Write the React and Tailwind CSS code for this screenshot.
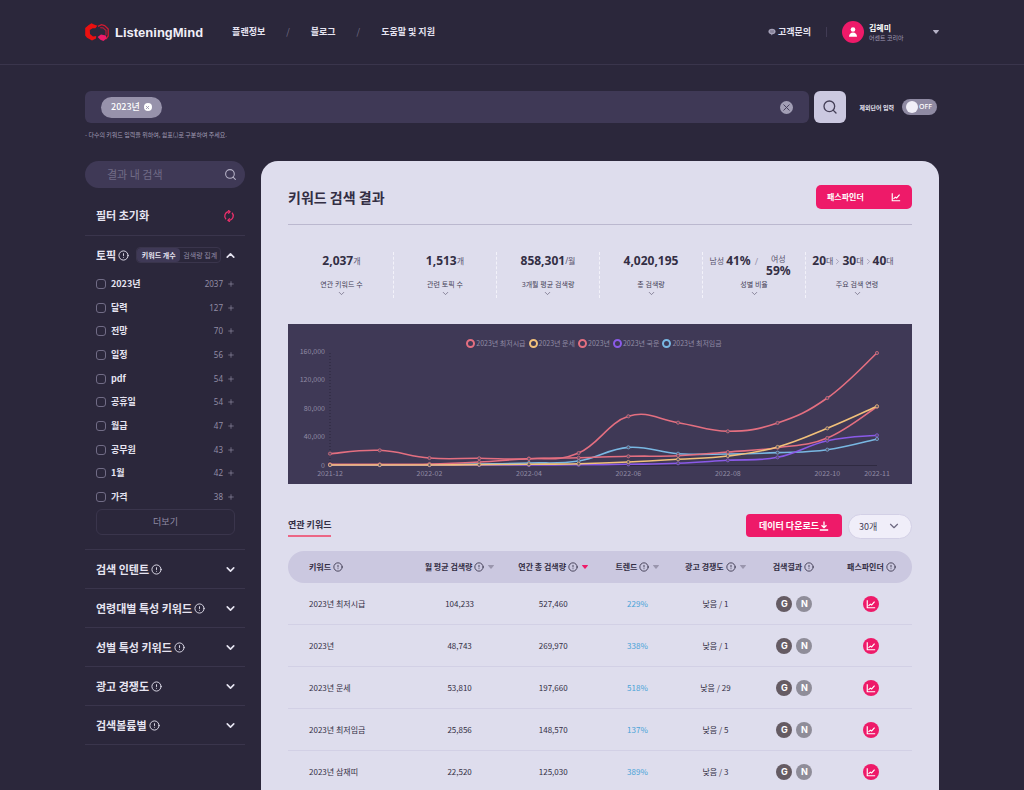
import React, { useState } from "react";
import { ChevronDown, ChevronRight, ChevronUp, CircleAlert, Plus, Search, X } from "lucide-react";

const TOPICS = [
  { name: "2023년", count: 2037 },
  { name: "달력", count: 127 },
  { name: "전망", count: 70 },
  { name: "일정", count: 56 },
  { name: "pdf", count: 54 },
  { name: "공휴일", count: 54 },
  { name: "월급", count: 47 },
  { name: "공무원", count: 43 },
  { name: "1월", count: 42 },
  { name: "가격", count: 38 },
];

const SECTIONS = ["검색 인텐트", "연령대별 특성 키워드", "성별 특성 키워드", "광고 경쟁도", "검색볼륨별"];

// monthly values in thousands, 2021-12 to 2022-11
const SERIES = [
  { name: "2023년 최저시급", color: "#e46f80", values: [15.9, 20.6, 9.8, 9.4, 8.8, 16.8, 68.4, 59.4, 47.3, 59, 94, 157.2] },
  { name: "2023년 운세", color: "#f2c17a", values: [0, 0, 0, 0.5, 1, 1.8, 4.2, 8, 12.6, 25.3, 51.5, 82.4] },
  { name: "2023년", color: "#e46f80", values: [1, 1, 1.4, 4.2, 8.8, 10.2, 12.2, 13, 18.2, 24.3, 37.9, 81.8] },
  { name: "2023년 국운", color: "#8a5ae8", values: [0, 0, 0, 0, 0, 0.3, 1, 2.4, 6.6, 10.8, 34.1, 41.7] },
  { name: "2023년 최저임금", color: "#79b8e3", values: [0, 0, 0.4, 1.4, 2.8, 5.6, 24.8, 15.8, 15.4, 17.3, 21.5, 36.5] },
];

const MONTHS = [
  { index: 0, label: "2021-12" },
  { index: 2, label: "2022-02" },
  { index: 4, label: "2022-04" },
  { index: 6, label: "2022-06" },
  { index: 8, label: "2022-08" },
  { index: 10, label: "2022-10" },
  { index: 11, label: "2022-11" },
];

const COLUMNS = [
  { label: "키워드", width: "w-[20%]" },
  { label: "월 평균 검색량", width: "w-[15%]", sort: "text-[#9a96ad]" },
  { label: "연간 총 검색량", width: "w-[15%]", sort: "text-[#ee1a69]" },
  { label: "트렌드", width: "w-[12%]", sort: "text-[#9a96ad]" },
  { label: "광고 경쟁도", width: "w-[13%]", sort: "text-[#9a96ad]" },
  { label: "검색결과", width: "w-[12%]" },
  { label: "패스파인더", width: "w-[13%]" },
];

const ROWS = [
  { keyword: "2023년 최저시급", monthly: "104,233", yearly: "527,460", trend: "229%", ads: "낮음 / 1" },
  { keyword: "2023년", monthly: "48,743", yearly: "269,970", trend: "338%", ads: "낮음 / 1" },
  { keyword: "2023년 운세", monthly: "53,810", yearly: "197,660", trend: "518%", ads: "낮음 / 29" },
  { keyword: "2023년 최저임금", monthly: "25,856", yearly: "148,570", trend: "137%", ads: "낮음 / 5" },
  { keyword: "2023년 삼재띠", monthly: "22,520", yearly: "125,030", trend: "389%", ads: "낮음 / 3" },
];

function Logo() {
  return (
    <svg viewBox="0 0 24 18" className="h-[18px] w-6" fill="none" aria-hidden="true">
      <path d="M6.5 0.3 L9 1.6 L12.4 2.8 L10.4 5.2 L7.6 5.2 L4.8 7 L5 11 L8 13.4 L11.2 13 L11 15.6 L7 17.6 L2 14.8 L0.2 12.4 V5 L3.4 2.2 Z" fill="#ea1010" />
      <path d="M13 3.4 L16.5 1.6 L19.6 2.6 L23.2 6 V13 L21 16" stroke="#d01a30" strokeWidth="1.3" />
      <path d="M15.2 4.6 L18 4.8 L21 7.6 V12" stroke="#b01c38" strokeWidth="1.2" />
      <path d="M12.6 14 L16 11.6 L20.8 12.4 L21.6 15.4 L18.4 17.9 L15.4 16.8 Z" fill="#ee1a69" />
    </svg>
  );
}

function Caret({ className }) {
  return (
    <svg viewBox="0 0 6 4" className={`h-1 w-1.5 shrink-0 ${className}`} aria-hidden="true">
      <path d="M0.5 0h5a.4.4 0 0 1 .3.7L3.3 3.7a.4.4 0 0 1-.6 0L.2.7A.4.4 0 0 1 .5 0Z" fill="currentColor" />
    </svg>
  );
}

function GraphIcon({ className }) {
  return (
    <svg viewBox="0 0 12 12" className={className} fill="none" stroke="currentColor" strokeWidth="1.4" aria-hidden="true">
      <path d="M1.5 1.5V10.5H11" />
      <path d="M3 8.3L5.2 6.2L6.8 7.2L10.3 3.2" />
    </svg>
  );
}

function Header() {
  return (
    <header className="flex h-[65px] items-center border-b border-[#3a354c] px-[85px]">
      <a href="#home" className="flex items-center gap-1.5">
        <Logo />
        <span className="font-['Liberation_Sans'] text-[13px] leading-none font-bold text-[#f1eff8]">ListeningMind</span>
      </a>
      <nav className="ml-[29px] flex items-center text-[9px] font-bold whitespace-nowrap">
        <a href="#plan">플랜정보</a>
        <span className="mx-[21px] font-normal text-[#77728a]">/</span>
        <a href="#blog">블로그</a>
        <span className="mx-[21px] font-normal text-[#77728a]">/</span>
        <a href="#help">도움말 및 지원</a>
      </nav>
      <div className="ml-auto flex items-center">
        <a href="#contact" className="flex items-center gap-0.5 text-[9px] font-bold">
          <svg viewBox="0 0 10 10" className="size-2" aria-hidden="true">
            <path d="M5 1c2.700 0 4.500 1.500 4.500 3.400S7.800 7.700 5.600 7.900L4.600 9.400L4 7.800C2 7.500 0.500 6.200 0.500 4.400c0-1.900 1.800-3.400 4.500-3.400Z" fill="#a5a1b8" />
            <path d="M2.500 3.700H7.500M2.900 5.200H7.100" stroke="#4d475f" strokeWidth="0.600" />
          </svg>
          고객문의
        </a>
        <span className="mx-[15px] h-2.5 w-px bg-[#413b54]" />
        <button type="button" className="flex items-center text-left">
          <span className="flex size-[22px] items-center justify-center rounded-full bg-[#ee1a69]">
            <svg viewBox="0 0 10 12" className="h-3 w-2.5" fill="#fff" aria-hidden="true">
              <circle cx="5" cy="3.500" r="2.300" />
              <path d="M1 10.800c0-2.600 1.600-4.200 4-4.200s4 1.600 4 4.200Z" />
            </svg>
          </span>
          <span className="ml-[5px] flex w-16 flex-col gap-0.5">
            <span className="text-[8px] leading-[8px] font-bold text-white">김혜미</span>
            <span className="text-[6px] leading-[7px] text-[#a29eb5]">어센트 코리아</span>
          </span>
          <Caret className="text-[#b5b1c6]" />
        </button>
      </div>
    </header>
  );
}

function SearchBar() {
  const [tags, setTags] = useState(["2023년"]);

  return (
    <section className="px-[85px] pt-[26px]">
      <div className="flex items-center">
        <div className="flex h-8 flex-1 items-center rounded-md bg-[#3f3956] px-4">
          {tags.map((tag) => (
            <span key={tag} className="flex h-[21px] items-center gap-1 rounded-full bg-[#9792ab] px-2.5 text-[9px] font-medium text-white">
              {tag}
              <button
                type="button"
                aria-label={`${tag} 삭제`}
                onClick={() => setTags(tags.filter((t) => t !== tag))}
                className="flex size-2 items-center justify-center rounded-full bg-white text-[#9792ab]"
              >
                <X size={5} strokeWidth={4} />
              </button>
            </span>
          ))}
          <input type="text" aria-label="키워드 입력" className="h-full min-w-0 flex-1 bg-transparent px-2 text-[9px] outline-none" />
          <button
            type="button"
            aria-label="전체 삭제"
            onClick={() => setTags([])}
            className="flex size-[13px] items-center justify-center rounded-full bg-[#a29eb5] text-[#3f3956]"
          >
            <X size={11} strokeWidth={2} />
          </button>
        </div>
        <button type="button" aria-label="검색" className="ml-[5px] flex size-8 items-center justify-center rounded-md bg-[#cbc8e0] text-[#453f57]">
          <Search size={16} strokeWidth={2} />
        </button>
        <label htmlFor="exclude" className="ml-3.5 text-[6px] font-bold whitespace-nowrap">
          제외단어 입력
        </label>
        <span className="relative mr-0.5 ml-2 flex">
          <input id="exclude" type="checkbox" className="peer h-4 w-[35px] appearance-none rounded-full bg-[#8f8aa3] checked:bg-[#ee1a69]" />
          <span className="pointer-events-none absolute top-0.5 left-1 size-3 rounded-full bg-[#f1eff8] peer-checked:hidden" />
          <span className="pointer-events-none absolute top-1 right-[5px] font-['Noto_Sans'] text-[7px] leading-2 font-medium text-white">OFF</span>
        </span>
      </div>
      <p className="mt-2 h-[30px] text-[6px] leading-2 text-[#a29eb5]">- 다수의 키워드 입력을 위하여, 쉼표(,)로 구분하여 주세요.</p>
    </section>
  );
}

function Sidebar() {
  return (
    <aside className="w-40 shrink-0">
      <div className="flex h-[27px] items-center rounded-full bg-[#3f3956] pr-2 pl-[22px]">
        <input
          type="search"
          aria-label="결과 내 검색"
          placeholder="결과 내 검색"
          className="min-w-0 flex-1 bg-transparent text-[11px] outline-none placeholder:text-[#716c87]"
        />
        <Search size={13} strokeWidth={2} className="text-[#b5b1c6]" />
      </div>

      <div className="flex h-12 items-center justify-between border-b border-[#3a354c] pt-2 pr-2.5 pl-[11px]">
        <h2 className="text-[11px] font-bold">필터 초기화</h2>
        <button type="button" aria-label="필터 초기화">
          <svg viewBox="0 0 12 12" className="size-3" fill="none" stroke="#ee2f6b" strokeWidth="1.300" aria-hidden="true">
            <path d="M3 9.300A4.500 4.500 0 0 1 5.800 1.700" />
            <path d="M9 2.700A4.500 4.500 0 0 1 6.200 10.300" />
            <path d="M5.200 0.200L7 1.800L5.200 3.600" />
            <path d="M6.800 8.400L5 10.200L6.800 11.800" />
          </svg>
        </button>
      </div>

      <div className="border-b border-[#3a354c] pb-3.5">
        <div className="flex h-9 items-center pt-0.5 pr-2 pl-[11px]">
          <h2 className="text-[11px] font-bold">토픽</h2>
          <CircleAlert size={11} strokeWidth={2} className="ml-0.5" />
          <div className="ml-[7px] flex h-4 rounded-sm border border-[#3a354c] text-[7px] whitespace-nowrap">
            <button type="button" className="w-[43px] rounded-sm bg-[#3f3956] font-bold">키워드 개수</button>
            <button type="button" className="w-10 text-[#918ca5]">검색량 집계</button>
          </div>
          <button type="button" aria-label="토픽 접기" className="ml-auto">
            <ChevronUp size={13} strokeWidth={3} />
          </button>
        </div>
        <ul className="flex h-[237px] flex-col pr-2.5 pl-[11px] leading-3">
          {TOPICS.map((topic) => (
            <li key={topic.name} className="flex flex-1 items-center">
              <label className="flex items-center gap-[5px] text-[9px] font-bold">
                <input
                  type="checkbox"
                  className="size-2.5 appearance-none rounded-[3px] border border-[#716c86] checked:bg-[#ee1a69]"
                />
                {topic.name}
              </label>
              <span className="ml-auto font-['Noto_Sans'] text-[8px] text-[#918ca5]">{topic.count}</span>
              <button type="button" aria-label={`${topic.name} 추가`} className="ml-1 text-[#918ca5]">
                <Plus size={8} strokeWidth={2} />
              </button>
            </li>
          ))}
        </ul>
        <div className="pr-2.5 pl-[11px]">
          <button type="button" className="block h-[26px] w-full rounded-md border border-[#3a354c] text-[9px] text-[#918ca5]">
            더보기
          </button>
        </div>
      </div>

      {SECTIONS.map((title) => (
        <div key={title} className="flex h-[39px] items-center border-b border-[#3a354c] pr-2 pl-[11px]">
          <h2 className="text-[11px] font-bold">{title}</h2>
          <CircleAlert size={11} strokeWidth={2} className="ml-0.5" />
          <button type="button" aria-label={`${title} 펼치기`} className="ml-auto">
            <ChevronDown size={13} strokeWidth={3} />
          </button>
        </div>
      ))}
    </aside>
  );
}

function Unit({ children }) {
  return <span className="text-[8px] font-normal text-[#5b5570]">{children}</span>;
}

function Stat({ label, className = "", children }) {
  return (
    <div className="flex flex-col items-center border-l border-dashed border-[#f3f2fa] first:border-l-0">
      <div className={`flex h-[18px] items-center justify-center text-[12px] leading-none font-bold whitespace-nowrap ${className}`}>{children}</div>
      <button type="button" className="mt-2.5 flex flex-col items-center text-[7px] leading-[9px] text-[#453f57]">
        {label}
        <ChevronDown size={9} strokeWidth={2} className="text-[#6d6880]" />
      </button>
    </div>
  );
}

function Stats() {
  return (
    <div className="mr-1 ml-0.5 mt-[27px] grid h-[45px] grid-cols-6 font-['Noto_Sans','Noto_Sans_CJK_KR',sans-serif]">
      <Stat label="연관 키워드 수">2,037<Unit>개</Unit></Stat>
      <Stat label="관련 토픽 수">1,513<Unit>개</Unit></Stat>
      <Stat label="3개월 평균 검색량">858,301<Unit>/월</Unit></Stat>
      <Stat label="총 검색량">4,020,195</Stat>
      <Stat label="성별 비율" className="pr-2">
        <Unit>남성</Unit>
        <span className="ml-0.5">41%</span>
        <span className="mx-1 text-[9px] font-normal text-[#9a96ad]">/</span>
        <span className="ml-1 flex flex-col items-center pt-2.5">
          <Unit>여성</Unit>
          <span className="mt-0.5">59%</span>
        </span>
      </Stat>
      <Stat label="주요 검색 연령" className="pr-2">
        20<Unit>대</Unit>
        <ChevronRight size={9} strokeWidth={2} className="text-[#9a96ad]" />
        30<Unit>대</Unit>
        <ChevronRight size={9} strokeWidth={2} className="text-[#9a96ad]" />
        40<Unit>대</Unit>
      </Stat>
    </div>
  );
}

const plotX = (i) => 42 + (i * 547) / 11;
const plotY = (v) => 117 - (v * 114) / 160;

function curve(values) {
  const pts = values.map((v, i) => [plotX(i), plotY(v)]);
  const at = (i) => pts[Math.max(0, Math.min(pts.length - 1, i))];
  return pts.slice(1).reduce((d, p, i) => {
    const a = at(i);
    const before = at(i - 1);
    const after = at(i + 2);
    const c1 = [a[0] + (p[0] - before[0]) * 0.2, a[1] + (p[1] - before[1]) * 0.2];
    const c2 = [p[0] - (after[0] - a[0]) * 0.2, p[1] - (after[1] - a[1]) * 0.2];
    return `${d} C${c1} ${c2} ${p}`;
  }, `M${pts[0]}`);
}

function TrendChart() {
  return (
    <div className="mt-[27px] bg-[#3f3956] pt-3.5">
      <ul className="flex h-2.5 items-center justify-center gap-[3px] pr-3 text-[7px] leading-2.5 text-[#918ca5]">
        {SERIES.map((s) => (
          <li key={s.name} className="flex items-center gap-px whitespace-nowrap">
            <span className="size-[9px] rounded-full border-2" style={{ borderColor: s.color }} />
            {s.name}
          </li>
        ))}
      </ul>
      <svg viewBox="0 0 624 136" className="block w-full overflow-visible text-[7px]" role="img" aria-label="월별 검색량 추이">
        {[160, 120, 80, 40, 0].map((v) => (
          <text key={v} x="37" y={plotY(v) + 2.5} textAnchor="end" fill="#918ca5">
            {v ? `${v},000` : "0"}
          </text>
        ))}
        {MONTHS.map((m) => (
          <text key={m.label} x={plotX(m.index)} y="128" textAnchor="middle" fill="#918ca5">
            {m.label}
          </text>
        ))}
        <path d="M42 5V117" stroke="#2b273b" strokeDasharray="1 2" />
        <path d="M42 117.500H589" stroke="#2f2a41" />
        {[...SERIES].reverse().map((s) => (
          <g key={s.name} fill="none" stroke={s.color}>
            <path d={curve(s.values)} strokeWidth="1.600" />
            {s.values.map((v, i) => (
              <circle key={i} cx={plotX(i)} cy={plotY(v)} r="1.600" fill="#5a5068" strokeWidth="0.700" />
            ))}
          </g>
        ))}
      </svg>
    </div>
  );
}

function KeywordTable() {
  return (
    <table className="mt-3 w-full table-fixed border-separate border-spacing-0 text-[8px] whitespace-nowrap">
      <thead>
        <tr className="h-8">
          {COLUMNS.map((col) => (
            <th key={col.label} className={`${col.width} bg-[#cbc8e0] p-0 font-bold first:rounded-l-full first:pl-[21px] last:rounded-r-full`}>
              <span className={`flex items-center gap-0.5 ${col.label === "키워드" ? "" : "justify-center"}`}>
                {col.label}
                <CircleAlert size={10} strokeWidth={2} />
                {col.sort && <Caret className={`ml-0.5 ${col.sort}`} />}
              </span>
            </th>
          ))}
        </tr>
      </thead>
      <tbody className="[&_td]:border-b [&_td]:border-[#d2d0e5] [&_td]:p-0">
        {ROWS.map((row) => (
          <tr key={row.keyword} className="h-[42px] text-center">
            <td className="text-left"><span className="pl-[21px]">{row.keyword}</span></td>
            <td>{row.monthly}</td>
            <td>{row.yearly}</td>
            <td className="text-[#4aa3d8]">{row.trend}</td>
            <td>{row.ads}</td>
            <td>
              <span className="flex justify-center gap-1 pl-0.5 font-['Inter'] text-[9px] font-bold text-white">
                <a href="#google" className="flex size-4 items-center justify-center rounded-full bg-[#655b63]">G</a>
                <a href="#naver" className="flex size-4 items-center justify-center rounded-full bg-[#8f8d99]">N</a>
              </span>
            </td>
            <td>
              <a href="#pathfinder" aria-label="패스파인더" className="mx-auto flex size-4 items-center justify-center rounded-full bg-[#ee1a69] text-white">
                <GraphIcon className="size-2.5" />
              </a>
            </td>
          </tr>
        ))}
      </tbody>
    </table>
  );
}

function Results() {
  return (
    <main className="min-w-0 flex-1 rounded-t-[17px] bg-[#dedded] px-[27px] pt-6 text-[#332e44]">
      <div className="flex items-center justify-between border-b border-[#bbb8cf] pb-[15px]">
        <h1 className="text-[14px] leading-6 font-bold">키워드 검색 결과</h1>
        <button type="button" className="flex h-6 w-24 items-center justify-between rounded-[5px] bg-[#ee1a69] px-[11px] text-[8px] font-bold text-white">
          패스파인더
          <GraphIcon className="size-2.5" />
        </button>
      </div>

      <Stats />
      <TrendChart />

      <div className="mt-[30px] flex h-[25px] items-start">
        <h2 className="h-[23px] border-b-2 border-[#ec6685] text-[9px] leading-[21px] font-bold">연관 키워드</h2>
        <button type="button" className="ml-auto flex h-[23px] w-24 items-center justify-center rounded-sm bg-[#ee1a69] text-[9px] font-bold whitespace-nowrap text-white">
          데이터 다운로드
          <svg viewBox="0 0 10 10" className="size-2.5" fill="none" stroke="currentColor" strokeWidth="1.300" aria-hidden="true">
            <path d="M5 0.500V6.500M2.500 4.200L5 6.700L7.500 4.200M0.800 9H9.200" />
          </svg>
        </button>
        <div className="relative ml-1.5">
          <select aria-label="표시 개수" className="block h-[25px] w-16 appearance-none rounded-full border border-[#d3d0e6] bg-[#f0eef9] pl-2.5 text-[9px] text-[#453f57]">
            <option>30개</option>
            <option>50개</option>
            <option>100개</option>
          </select>
          <ChevronDown size={14} strokeWidth={2} className="pointer-events-none absolute top-[5px] right-[11px] text-[#6d6880]" />
        </div>
      </div>

      <KeywordTable />
    </main>
  );
}

function App() {
  return (
    <div className="h-screen overflow-y-auto bg-[#2b273b] font-['Noto_Sans_CJK_KR',sans-serif] text-[#e6e4f1] [scrollbar-width:none]">
      <Header />
      <SearchBar />
      <div className="flex items-start gap-4 px-[85px]">
        <Sidebar />
        <Results />
      </div>
    </div>
  );
}

export default App;
